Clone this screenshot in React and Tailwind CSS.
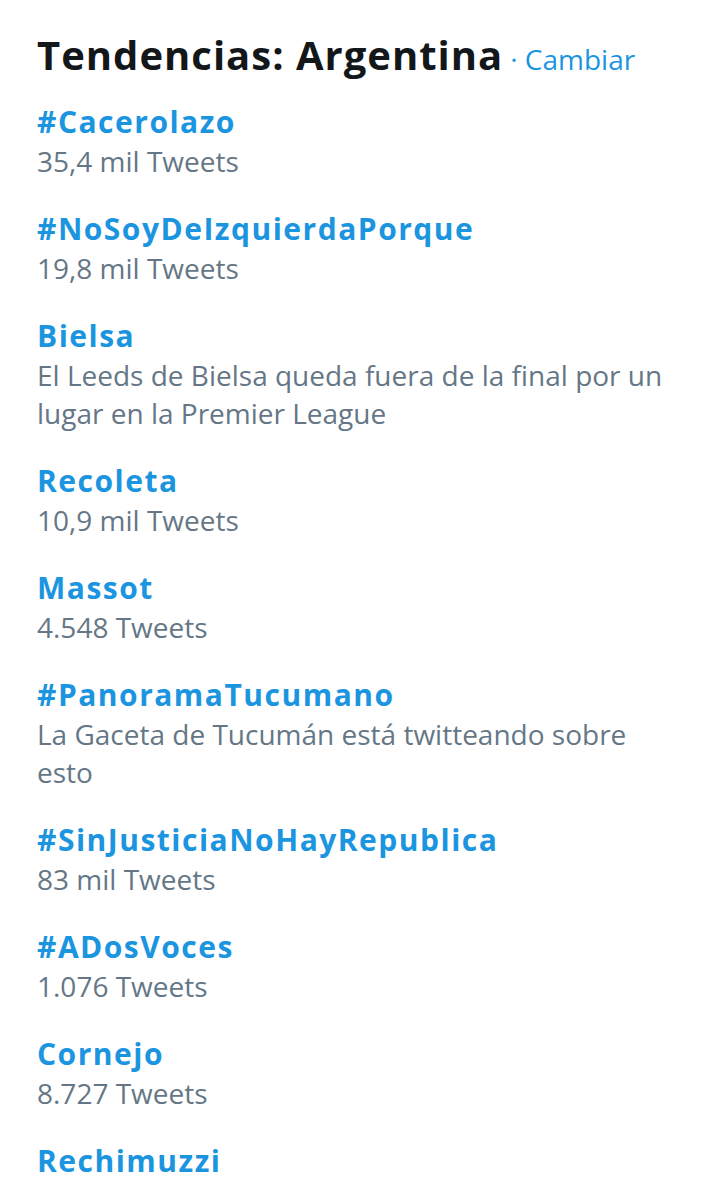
import React from 'react';

const trends = [
  { name: '#Cacerolazo', meta: '35,4 mil Tweets' },
  { name: '#NoSoyDeIzquierdaPorque', meta: '19,8 mil Tweets' },
  { name: 'Bielsa', meta: 'El Leeds de Bielsa queda fuera de la final por un lugar en la Premier League' },
  { name: 'Recoleta', meta: '10,9 mil Tweets' },
  { name: 'Massot', meta: '4.548 Tweets' },
  { name: '#PanoramaTucumano', meta: 'La Gaceta de Tucumán está twitteando sobre esto' },
  { name: '#SinJusticiaNoHayRepublica', meta: '83 mil Tweets' },
  { name: '#ADosVoces', meta: '1.076 Tweets' },
  { name: 'Cornejo', meta: '8.727 Tweets' },
  { name: 'Rechimuzzi', meta: '' },
];

export default function App() {
  return (
    <div className="w-[712px] h-[1200px] bg-white overflow-hidden pl-[37px] pr-[36px] pt-[27px] font-['Open_Sans',sans-serif]">
      <div className="flex items-baseline leading-[56px]">
        <h1 className="text-[40px] font-bold text-[#14171a] tracking-[1px] whitespace-nowrap">Tendencias: Argentina</h1>
        <span className="ml-[7px] text-[28px] text-[#1b95e0] whitespace-nowrap">· Cambiar</span>
      </div>
      <ul className="mt-[14px]">
        {trends.map((t) => (
          <li key={t.name} className="pb-[28px]">
            <p className="text-[30px] font-bold leading-[41px] text-[#1b95e0] tracking-[1.5px]">{t.name}</p>
            {t.meta && (
              <p className="text-[28px] leading-[38px] text-[#657786]">{t.meta}</p>
            )}
          </li>
        ))}
      </ul>
    </div>
  );
}
